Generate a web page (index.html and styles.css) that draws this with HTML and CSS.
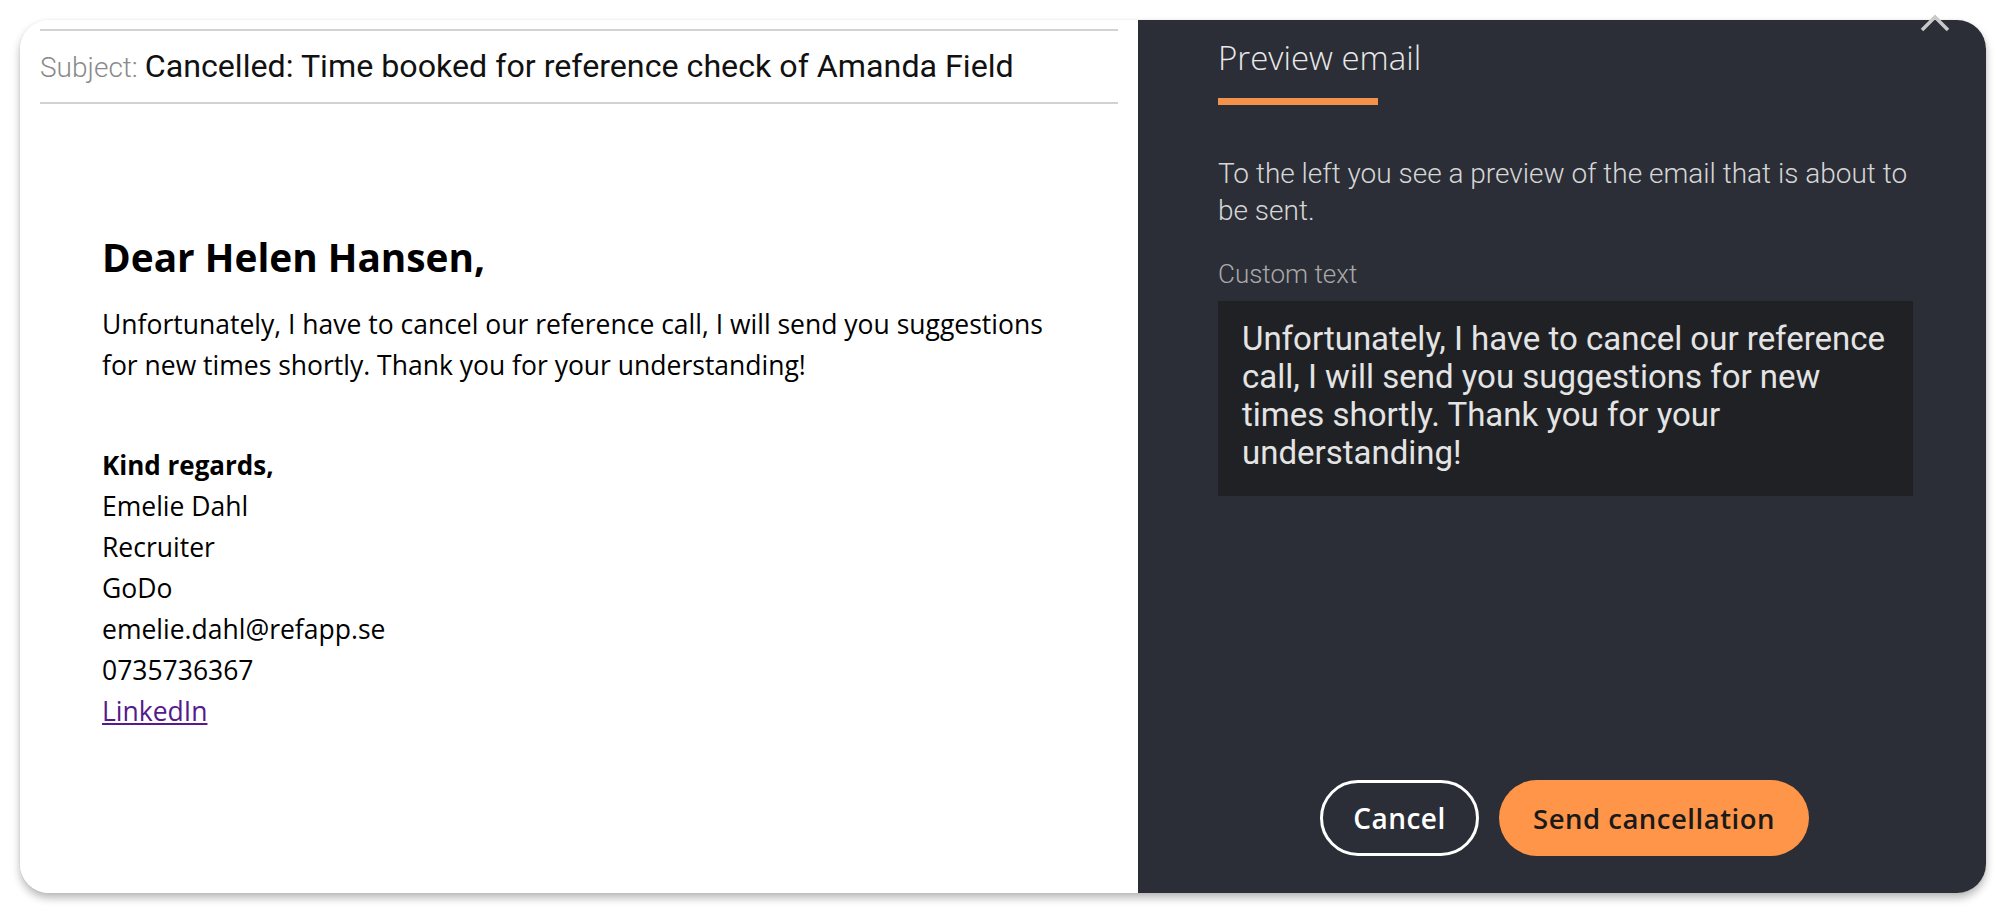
FILE: index.html
```html
<!DOCTYPE html>
<html lang="en">
<head>
<meta charset="utf-8">
<title>Preview email</title>
<link rel="stylesheet" href="styles.css">
</head>
<body>
<div class="modal">
  <section class="email-pane">
    <div class="subject-row">
      <span class="subject-label">Subject:</span>
      <span class="subject-text">Cancelled: Time booked for reference check of Amanda Field</span>
    </div>
    <div class="email-body">
      <h1 class="greeting">Dear Helen Hansen,</h1>
      <p class="message">Unfortunately, I have to cancel our reference call, I will send you suggestions for new times shortly. Thank you for your understanding!</p>
      <div class="signature">
        <div class="sig-strong">Kind regards,</div>
        <div>Emelie Dahl</div>
        <div>Recruiter</div>
        <div>GoDo</div>
        <div>emelie.dahl@refapp.se</div>
        <div>0735736367</div>
        <div><a class="sig-link" href="#">LinkedIn</a></div>
      </div>
    </div>
  </section>
  <aside class="side-pane">
    <h2 class="side-title">Preview email</h2>
    <div class="side-bar"></div>
    <p class="side-desc">To the left you see a preview of the email that is about to be sent.</p>
    <div class="field-label">Custom text</div>
    <div class="custom-text">Unfortunately, I have to cancel our reference call, I will send you suggestions for new times shortly. Thank you for your understanding!</div>
    <div class="actions">
      <button class="btn btn-outline">Cancel</button>
      <button class="btn btn-primary">Send cancellation</button>
    </div>
  </aside>
  <svg class="close-icon" width="34" height="22" viewBox="0 0 34 22" aria-hidden="true">
    <path d="M4 16 L17 3 L30 16" fill="none" stroke="#c9c9c9" stroke-width="3.5"/>
  </svg>
</div>
</body>
</html>
```

FILE: styles.css
```css
* { box-sizing: border-box; }
html, body { margin: 0; padding: 0; background: #ffffff; }
body { width: 2006px; height: 914px; overflow: hidden; }

.modal {
  position: relative;
  margin: 20px 0 0 20px;
  width: 1966px;
  height: 873px;
  border-radius: 29px;
  display: flex;
  background: #ffffff;
  box-shadow: 0 5px 9px rgba(0, 0, 0, 0.28), 0 0 3px rgba(0, 0, 0, 0.06);
}

.email-pane {
  width: 1118px;
  padding: 9px 20px 0 20px;
  background: #ffffff;
  border-radius: 29px 0 0 29px;
}

.subject-row {
  border-top: 2px solid #d2d2d2;
  border-bottom: 2px solid #d2d2d2;
  height: 75px;
  display: flex;
  align-items: baseline;
  padding-top: 16px;
  gap: 7px;
  font-family: Roboto, "Liberation Sans", sans-serif;
}
.subject-label { color: #8a8a8a; font-weight: 300; font-size: 28px; }
.subject-text { color: #111111; font-weight: 400; font-size: 32.2px; }

.email-body {
  padding-left: 62px;
  font-family: "Open Sans", "Noto Sans", sans-serif;
  color: #000000;
}
.greeting {
  margin: 130px 0 0 0;
  font-size: 38.8px;
  line-height: 46px;
  font-weight: 700;
}
.message {
  margin: 24px 0 0 0;
  width: 958px;
  font-size: 26.5px;
  line-height: 41px;
}
.signature {
  margin-top: 59px;
  font-size: 26.5px;
  line-height: 41px;
}
.sig-strong { font-weight: 700; font-size: 26px; }
.sig-link { color: #551a8b; text-decoration: underline; }

.side-pane {
  flex: 1;
  background: #2b2e36;
  border-radius: 0 29px 29px 0;
  padding: 18px 73px 37px 80px;
  display: flex;
  flex-direction: column;
  align-items: flex-start;
}
.side-title {
  margin: 0;
  font-family: "Open Sans", "Noto Sans", sans-serif;
  font-weight: 300;
  font-size: 33px;
  line-height: 40px;
  color: #e9e9e9;
}
.side-bar {
  margin-top: 20px;
  width: 160px;
  height: 7px;
  background: #f3924a;
}
.side-desc {
  margin: 50px -8px 0 0;
  font-family: Roboto, "Liberation Sans", sans-serif;
  font-weight: 300;
  font-size: 28px;
  line-height: 37px;
  color: #d6d6d6;
}
.field-label {
  margin-top: 30px;
  font-family: Roboto, "Liberation Sans", sans-serif;
  font-weight: 300;
  font-size: 26px;
  line-height: 30px;
  color: #a9a9a9;
}
.custom-text {
  margin-top: 12px;
  width: 100%;
  height: 195px;
  background: #202125;
  padding: 19px 16px 0 24px;
  font-family: Roboto, "Liberation Sans", sans-serif;
  font-size: 33px;
  line-height: 38px;
  color: #e4e4e4;
}

.actions {
  margin-top: auto;
  align-self: stretch;
  display: flex;
  justify-content: center;
  gap: 20px;
  padding-right: 2px;
}
.btn {
  height: 76px;
  border-radius: 38px;
  font-family: "Open Sans", "Noto Sans", sans-serif;
  font-weight: 600;
  font-size: 28px;
  letter-spacing: 0.5px;
  cursor: pointer;
}
.btn-outline {
  width: 159px;
  background: transparent;
  border: 3.5px solid #ffffff;
  color: #ffffff;
}
.btn-primary {
  width: 310px;
  background: #ff9549;
  border: none;
  color: #1a1a1a;
  font-size: 27.5px;
}

.close-icon {
  position: absolute;
  left: 1898px;
  top: -6px;
}
```
